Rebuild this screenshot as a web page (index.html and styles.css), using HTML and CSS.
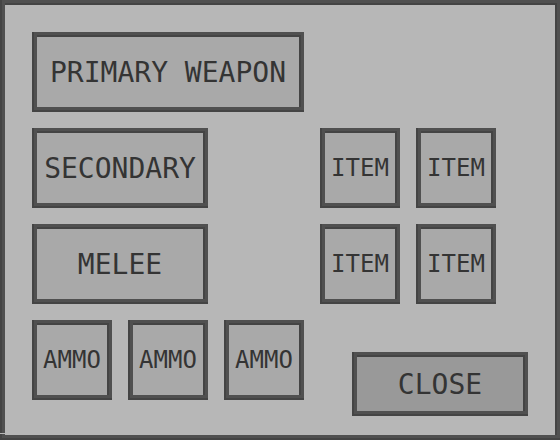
FILE: index.html
```html
<!DOCTYPE html>
<html lang="en">
<head>
<meta charset="utf-8">
<meta name="viewport" content="width=device-width, initial-scale=1">
<title>Inventory</title>
<link rel="stylesheet" href="styles.css">
</head>
<body>
<main class="panel bevel">
  <button class="slot bevel primary" type="button">PRIMARY WEAPON</button>
  <button class="slot bevel secondary" type="button">SECONDARY</button>
  <button class="slot bevel small item-a" type="button">ITEM</button>
  <button class="slot bevel small item-b" type="button">ITEM</button>
  <button class="slot bevel melee" type="button">MELEE</button>
  <button class="slot bevel small item-a" type="button">ITEM</button>
  <button class="slot bevel small item-b" type="button">ITEM</button>
  <button class="slot bevel small ammo" type="button">AMMO</button>
  <button class="slot bevel small ammo" type="button">AMMO</button>
  <button class="slot bevel small ammo" type="button">AMMO</button>
  <button class="slot bevel close" type="button">CLOSE</button>
</main>
</body>
</html>
```
FILE: styles.css
```css
:root {
  --edge-light: #505050;
  --edge-dark: #444444;
}

* {
  box-sizing: border-box;
}

body {
  margin: 0;
}

/* Two-tone frame: dark strip outside on the left and bottom, inside on the top and right */
.bevel {
  box-shadow:
    inset 2px 0 var(--edge-dark),
    inset 0 -2px var(--edge-dark),
    inset 5px 0 var(--edge-light),
    inset 0 -5px var(--edge-light),
    inset 0 3px var(--edge-light),
    inset -3px 0 var(--edge-light),
    inset 0 5px var(--edge-dark),
    inset -5px 0 var(--edge-dark);
}

.panel {
  position: relative;
  display: grid;
  grid-template-columns: repeat(5, 80px) 1fr;
  grid-template-rows: repeat(3, 80px) 1fr;
  gap: 16px;
  min-height: 100vh;
  padding: 32px 32px 24px;
  background: #b7b7b7;
}

/* Seam in the left frame */
.panel::before {
  content: "";
  position: absolute;
  left: 0;
  bottom: 6px;
  width: 5px;
  height: 1px;
  background: #b7b7b7;
}

.slot {
  display: flex;
  align-items: center;
  justify-content: center;
  height: 80px;
  padding: 2px 0 0;
  border: 0;
  background: #a9a9a9;
  color: #343434;
  font: 28px/32px "DejaVu Sans Mono", monospace;
  white-space: nowrap;
  cursor: pointer;
}

.small {
  padding: 0;
  font-size: 24px;
}

.primary {
  grid-column: 1 / span 3;
}

.secondary,
.melee {
  grid-column: 1 / span 2;
}

.item-a {
  grid-column: 4;
}

.item-b {
  grid-column: 5;
}

.ammo {
  grid-row: 4;
}

.close {
  grid-column: 4 / -1;
  grid-row: 4;
  align-self: end;
  justify-self: end;
  width: 176px;
  height: 64px;
  background: #999999;
}
```
